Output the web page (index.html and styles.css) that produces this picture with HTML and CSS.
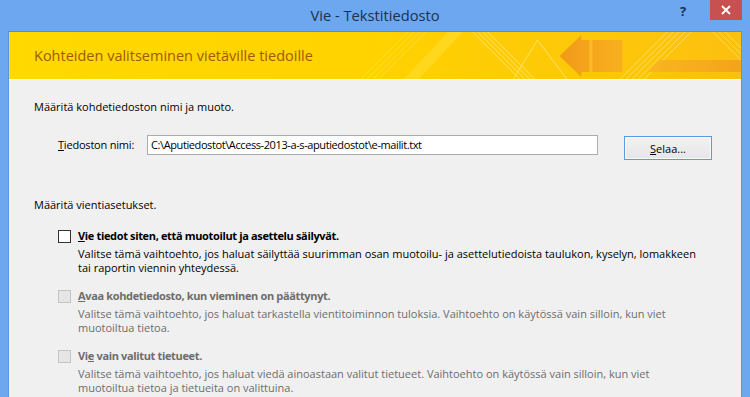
FILE: index.html
```html
<!DOCTYPE html>
<html lang="fi">
<head>
<meta charset="utf-8">
<title>Vie - Tekstitiedosto</title>
<link rel="stylesheet" href="styles.css">
</head>
<body>
<div class="window">
  <div class="titlebar">
    <div class="title">Vie - Tekstitiedosto</div>
    <div class="help">?</div>
    <div class="close">
      <svg width="10" height="10" viewBox="0 0 10 10"><path d="M1 1 L9 9 M9 1 L1 9" stroke="#fff" stroke-width="1.8"/></svg>
    </div>
  </div>
  <div class="client">
    <div class="banner">
      <svg class="banner-art" width="734" height="48" viewBox="0 0 734 48" preserveAspectRatio="none">
        <defs>
          <linearGradient id="bg" x1="0" y1="0" x2="1" y2="0">
            <stop offset="0" stop-color="#ffd900"/>
            <stop offset="0.5" stop-color="#ffd200"/>
            <stop offset="1" stop-color="#fcc010"/>
          </linearGradient>
          <linearGradient id="arr" x1="0" y1="0" x2="1" y2="0">
            <stop offset="0" stop-color="#f29a18"/>
            <stop offset="1" stop-color="#f8b01f"/>
          </linearGradient>
          <linearGradient id="band" x1="0" y1="0" x2="1" y2="0">
            <stop offset="0" stop-color="#f9b422"/>
            <stop offset="1" stop-color="#f3a01c"/>
          </linearGradient>
        </defs>
        <rect width="734" height="48" fill="url(#bg)"/>
        <g stroke="#ffe04a" stroke-width="1" opacity="0.8">
          <path d="M352 48 L400 0 M358 48 L406 0 M364 48 L412 0 M370 48 L418 0"/>
        </g>
        <polygon points="395,48 440,0 455,0 410,48" fill="#ffdd30" opacity="0.6"/>
        <g stroke="#ffe36a" stroke-width="1">
          <path d="M465 0 L513 48 M470 0 L518 48 M475 0 L523 48 M480 0 L528 48"/>
          <path d="M530 8 L505 48 M530 8 L560 48"/>
        </g>
        <polygon points="552,24 574,3 574,8 615,8 615,40 574,40 574,45" fill="url(#arr)"/>
        <rect x="582" y="8" width="3" height="32" fill="#fbc22a" opacity="0.8"/>
        <g stroke="#ffe066" stroke-width="1" opacity="0.9">
          <path d="M612 48 L660 0 M618 48 L666 0 M624 48 L672 0 M630 48 L678 0 M636 48 L684 0"/>
        </g>
        <polygon points="640,40 734,40 734,28 652,28" fill="url(#band)" opacity="0.9"/>
        <g stroke="#ffd84a" stroke-width="1">
          <path d="M706 0 L734 28 M712 0 L734 22 M718 0 L734 16"/>
        </g>
        <rect y="47" width="734" height="1" fill="#fbfbfb"/>
      </svg>
      <div class="banner-text">Kohteiden valitseminen vietäville tiedoille</div>
    </div>
    <div class="content">
      <div class="heading">Määritä kohdetiedoston nimi ja muoto.</div>
      <div class="file-row">
        <label class="file-label"><u>T</u>iedoston nimi:</label>
        <div class="input">C:\Aputiedostot\Access-2013-a-s-aputiedostot\e-mailit.txt</div>
        <div class="button"><u>S</u>elaa...</div>
      </div>
      <div class="heading heading-2">Määritä vientiasetukset.</div>
      <div class="options">
        <div class="option">
          <div class="checkbox"></div>
          <div class="option-body">
            <div class="option-label"><u>V</u>ie tiedot siten, että muotoilut ja asettelu säilyvät.</div>
            <div class="option-desc">Valitse tämä vaihtoehto, jos haluat säilyttää suurimman osan muotoilu- ja asettelutiedoista taulukon, kyselyn, lomakkeen<br>tai raportin viennin yhteydessä.</div>
          </div>
        </div>
        <div class="option disabled">
          <div class="checkbox"></div>
          <div class="option-body">
            <div class="option-label"><u>A</u>vaa kohdetiedosto, kun vieminen on päättynyt.</div>
            <div class="option-desc">Valitse tämä vaihtoehto, jos haluat tarkastella vientitoiminnon tuloksia. Vaihtoehto on käytössä vain silloin, kun viet<br>muotoiltua tietoa.</div>
          </div>
        </div>
        <div class="option disabled">
          <div class="checkbox"></div>
          <div class="option-body">
            <div class="option-label">Vi<u>e</u> vain valitut tietueet.</div>
            <div class="option-desc">Valitse tämä vaihtoehto, jos haluat viedä ainoastaan valitut tietueet. Vaihtoehto on käytössä vain silloin, kun viet<br>muotoiltua tietoa ja tietueita on valittuina.</div>
          </div>
        </div>
      </div>
    </div>
  </div>
</div>
</body>
</html>
```

FILE: styles.css
```css
* { box-sizing: border-box; }
html, body {
  margin: 0;
  padding: 0;
  width: 750px;
  height: 397px;
  overflow: hidden;
  background: #6ca7ef;
  font-family: "Open Sans", "Noto Sans", sans-serif;
  font-size: 11px;
  color: #000;
}
.window {
  display: flex;
  flex-direction: column;
  height: 397px;
  background: #6ca7ef;
}
.titlebar {
  position: relative;
  height: 31px;
  flex: none;
  display: flex;
  align-items: center;
  justify-content: center;
}
.title {
  font-size: 14.7px;
  color: #1b3150;
  margin-top: -1px;
}
.help {
  position: absolute;
  left: 680px;
  top: 2px;
  font-weight: bold;
  font-size: 13px;
  color: #1b3150;
}
.close {
  position: absolute;
  left: 710px;
  top: 0;
  width: 32px;
  height: 20px;
  background: #c75050;
  display: flex;
  align-items: center;
  justify-content: center;
}
.client {
  flex: 1;
  margin: 0 8px;
  border-top: 1px solid #4d8fdc;
  border-left: 1px solid #5a97e0;
  border-right: 1px solid #5a97e0;
  background: #f0f0f0;
  display: flex;
  flex-direction: column;
}
.banner {
  position: relative;
  height: 48px;
  flex: none;
  display: flex;
  align-items: center;
  padding-left: 25px;
}
.banner-art {
  position: absolute;
  left: 0;
  top: 0;
  width: 100%;
  height: 100%;
}
.banner-text {
  position: relative;
  font-size: 14.5px;
  color: #a05a00;
  margin-top: -1px;
}
.content {
  padding: 19px 0 0 25px;
  display: flex;
  flex-direction: column;
  white-space: nowrap;
}
.heading {
  line-height: 16px;
}
.heading-2 {
  margin-top: 37px;
}
.file-row {
  display: flex;
  align-items: flex-start;
  margin-top: 20px;
  height: 25px;
}
.file-label {
  margin-left: 24px;
  width: 89px;
  line-height: 20px;
  letter-spacing: -0.2px;
}
.input {
  width: 451px;
  height: 20px;
  border: 1px solid #abadb3;
  background: #fff;
  padding-left: 3px;
  line-height: 18px;
  letter-spacing: -0.4px;
}
.button {
  margin-left: 26px;
  margin-top: 1px;
  width: 88px;
  height: 24px;
  border: 1px solid #5a9ae0;
  background: linear-gradient(#f2f2f2, #e6e6e6);
  box-shadow: inset 0 0 0 1px #f8f8f8;
  display: flex;
  align-items: center;
  justify-content: center;
}
.options {
  margin-top: 15px;
  padding-left: 24px;
  display: flex;
  flex-direction: column;
  gap: 13px;
}
.option {
  display: flex;
  gap: 7px;
}
.checkbox {
  flex: none;
  width: 13px;
  height: 13px;
  margin-top: 2px;
  border: 1px solid #333;
  background: #fff;
}
.option-label {
  font-weight: bold;
  line-height: 16px;
  letter-spacing: -0.35px;
}
.option-desc {
  margin-top: 3px;
  line-height: 14px;
}
.disabled .checkbox {
  border-color: #c4c4c4;
  background: #e6e6e6;
}
.disabled .option-label,
.disabled .option-desc {
  color: #6d6d6d;
}
```
